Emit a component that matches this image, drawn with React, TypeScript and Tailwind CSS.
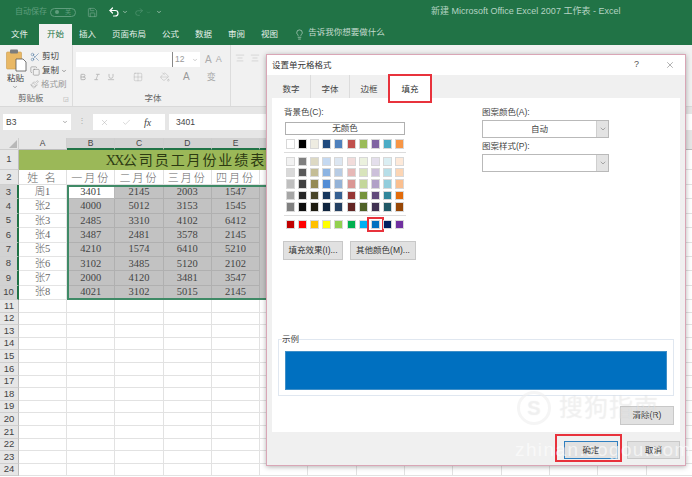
import { Save, Undo2, Redo2, Scissors, Copy, Paintbrush, Lightbulb, X, Check, ChevronDown, Bold, Italic, Underline, Grid2x2, PaintBucket, AlignCenter } from 'lucide-react';

const tabs = ['文件', '开始', '插入', '页面布局', '公式', '数据', '审阅', '视图'];
const columns = ['A', 'B', 'C', 'D', 'E', 'F', 'G', 'H', 'I', 'J', 'K', 'L', 'M', 'N'];

const people = [
  ['周1', '3401', '2145', '2003', '1547'],
  ['张2', '4000', '5012', '3153', '1545'],
  ['张3', '2485', '3310', '4102', '6412'],
  ['张4', '3487', '2481', '3578', '2145'],
  ['张5', '4210', '1574', '6410', '5210'],
  ['张6', '3102', '3485', '5120', '2102'],
  ['张7', '2000', '4120', '3481', '3547'],
  ['张8', '4021', '3102', '5015', '2145'],
];

const themeRow = ['bg-[#ffffff]', 'bg-[#000000]', 'bg-[#eeece1]', 'bg-[#1f497d]', 'bg-[#4f81bd]', 'bg-[#c0504d]', 'bg-[#9bbb59]', 'bg-[#8064a2]', 'bg-[#4bacc6]', 'bg-[#f79646]'];
const tintRows = [
  ['bg-[#f2f2f2]', 'bg-[#7f7f7f]', 'bg-[#ddd9c4]', 'bg-[#c5d9f1]', 'bg-[#dce6f1]', 'bg-[#f2dcdb]', 'bg-[#ebf1de]', 'bg-[#e4dfec]', 'bg-[#daeef3]', 'bg-[#fde9d9]'],
  ['bg-[#d9d9d9]', 'bg-[#595959]', 'bg-[#c4bd97]', 'bg-[#8db4e2]', 'bg-[#b8cce4]', 'bg-[#e6b8b7]', 'bg-[#d8e4bc]', 'bg-[#ccc0da]', 'bg-[#b7dee8]', 'bg-[#fcd5b4]'],
  ['bg-[#bfbfbf]', 'bg-[#404040]', 'bg-[#948a54]', 'bg-[#538dd5]', 'bg-[#95b3d7]', 'bg-[#da9694]', 'bg-[#c4d79b]', 'bg-[#b1a0c7]', 'bg-[#92cddc]', 'bg-[#fabf8f]'],
  ['bg-[#a6a6a6]', 'bg-[#262626]', 'bg-[#494529]', 'bg-[#16365c]', 'bg-[#366092]', 'bg-[#963634]', 'bg-[#76933c]', 'bg-[#60497a]', 'bg-[#31869b]', 'bg-[#e26b0a]'],
  ['bg-[#808080]', 'bg-[#0d0d0d]', 'bg-[#1d1b10]', 'bg-[#0f243e]', 'bg-[#244062]', 'bg-[#632523]', 'bg-[#4f6228]', 'bg-[#403151]', 'bg-[#215967]', 'bg-[#974706]'],
];
const standardRow = ['bg-[#c00000]', 'bg-[#ff0000]', 'bg-[#ffc000]', 'bg-[#ffff00]', 'bg-[#92d050]', 'bg-[#00b050]', 'bg-[#00b0f0]', 'bg-[#0070c0]', 'bg-[#002060]', 'bg-[#7030a0]'];

function SwatchRow({ colors, selected }: { colors: string[]; selected?: number }) {
  return (
    <div className="flex justify-between w-[118px]">
      {colors.map((c, i) => (
        <div key={c} className="relative w-[9px] h-[9.5px]">
          <div className={`w-full h-full border border-[#d8d8d8] ${c}`} />
          {selected === i && (
            <div className="absolute -left-[4px] -top-[3px] w-[17px] h-[15px] border-2 border-[#e8323c]" />
          )}
        </div>
      ))}
    </div>
  );
}

function Select({ value, label }: { value?: string; label: string }) {
  return (
    <div>
      <div className="text-[8.5px] leading-[12px] text-[#444]">{label}</div>
      <div className="flex items-center h-[18px] w-[127px] border border-[#b9b9b9] bg-white mt-[2px]">
        <div className="flex-1 text-center text-[8.5px] text-[#444]">{value}</div>
        <div className="flex items-center justify-center w-[12px] h-full bg-[#e3e3e3] border-l border-[#cfcfcf]">
          <ChevronDown size={8} strokeWidth={1.5} className="text-[#666]" />
        </div>
      </div>
    </div>
  );
}

function GreyButton({ text, className }: { text: string; className: string }) {
  return (
    <div className={`flex items-center justify-center bg-[#e1e1e1] border border-[#c8c8c8] text-[8.5px] text-[#333] ${className}`}>
      {text}
    </div>
  );
}

function PasteIcon() {
  return (
    <svg width="21" height="24" viewBox="0 0 21 24">
      <rect x="0.5" y="4" width="15" height="17" rx="1" fill="#e9b865" stroke="#c99a4c" strokeWidth="0.6" />
      <rect x="4" y="1.5" width="8" height="4" rx="1" fill="#7d7d7d" />
      <path d="M10 11h7l3 3v9H10z" fill="#fff" stroke="#555" strokeWidth="0.8" />
    </svg>
  );
}

function TitleBar() {
  return (
    <div className="flex items-center h-[24px] bg-[#217346] text-[#8fb9a3] pl-[15px]">
      <span className="text-[8px] text-[#5f9e7d]">自动保存</span>
      <div className="flex items-center justify-between ml-[3px] w-[26px] h-[9px] px-[4px] rounded-full border border-[#5f9e7d] text-[6px] text-[#5f9e7d]">
        <span className="w-[4px] h-[4px] bg-[#5f9e7d] rounded-full" />
        <span>关</span>
      </div>
      <Save size={11} strokeWidth={1.3} className="ml-[11px] text-[#7fae96]" />
      <Undo2 size={12} strokeWidth={2.4} className="ml-[10px] text-white" />
      <ChevronDown size={6} className="ml-[2px] text-white" />
      <Redo2 size={10} strokeWidth={1.3} className="ml-[6px] text-[#5f9e7d]" />
      <ChevronDown size={5} className="ml-[2px] text-[#5f9e7d]" />
      <ChevronDown size={6} className="ml-[5px] text-white" />
      <span className="ml-[269px] text-[9px] whitespace-nowrap text-[#b5d3c3]">新建 Microsoft Office Excel 2007 工作表 - Excel</span>
    </div>
  );
}

function TabBar() {
  return (
    <div className="flex items-end h-[21px] bg-[#217346] pl-[3px]">
      {tabs.map((t) => (
        <div
          key={t}
          className={`flex items-center justify-center h-[21px] px-[8px] text-[8.5px] whitespace-nowrap ${
            t === '开始' ? 'bg-[#f1f1f1] text-[#217346] ml-[3px] -mr-[1px]' : 'text-[#e6f0ea]'
          }`}
        >
          {t}
        </div>
      ))}
      <Lightbulb size={11} strokeWidth={1.2} className="ml-[8px] mb-[5px] text-[#e6f0ea]" />
      <span className="ml-[3px] mb-[6px] text-[8.5px] text-[#c5dbcf] whitespace-nowrap">告诉我你想要做什么</span>
    </div>
  );
}

function Ribbon() {
  return (
    <div className="flex h-[62px] bg-[#f1f1f1] border-b border-[#d9d9d9] overflow-hidden">
      {/* clipboard */}
      <div className="flex flex-col w-[73px] border-r border-[#dcdcdc] shrink-0">
        <div className="flex flex-1 pl-[6px] pt-[3px]">
          <div className="flex flex-col items-start w-[24px]">
            <PasteIcon />
            <span className="text-[8.5px] leading-[11px] text-[#444] mt-[1px] ml-[1px]">粘贴</span>
            <ChevronDown size={6} className="ml-[6px] text-[#555]" />
          </div>
          <div className="flex flex-col gap-[3px] pt-[3px] text-[8.5px] leading-[11px] text-[#444]">
            <div className="flex items-center gap-[2px]"><Scissors size={10} strokeWidth={1.2} className="text-[#44709c]" />剪切</div>
            <div className="flex items-center gap-[2px]"><Copy size={10} strokeWidth={1.2} className="text-[#777]" />复制<ChevronDown size={6} /></div>
            <div className="flex items-center gap-[2px] text-[#999]"><Paintbrush size={9} strokeWidth={1.2} />格式刷</div>
          </div>
        </div>
        <div className="flex justify-between h-[14px] text-[8.5px] pl-[18px] pr-[3px] text-[#666]"><span>剪贴板</span><span className="text-[#999] text-[6px] mt-[3px]">◲</span></div>
      </div>
      {/* font */}
      <div className="flex flex-col w-[158px] border-r border-[#dcdcdc] shrink-0 pl-[3px]">
        <div className="flex items-center flex-1 flex-col">
          <div className="flex items-center w-full pt-[7px]">
            <div className="w-[97px] h-[15px] bg-white border-r border-[#888]" />
            <div className="flex items-center justify-between w-[27px] h-[15px] bg-white text-[8.5px] text-[#999] px-[2px]">12<ChevronDown size={6} /></div>
            <span className="ml-[5px] text-[10px] text-[#aaa]">A</span>
            <span className="ml-[4px] text-[9px] text-[#aaa]">A</span>
          </div>
          <div className="flex items-center w-full gap-[6px] pt-[5px] pl-[3px] text-[#aaa]">
            <Bold size={8} strokeWidth={2.4} />
            <Italic size={8} />
            <Underline size={8} />
            <Grid2x2 size={10} strokeWidth={1} className="ml-[12px]" />
            <PaintBucket size={10} strokeWidth={1} className="ml-[11px]" />
            <span className="text-[10px] leading-none ml-[7px] text-[#999]">A</span>
            <span className="text-[9px] leading-none ml-[11px]">变</span>
          </div>
        </div>
        <div className="h-[14px] text-[8.5px] text-center text-[#666]">字体</div>
      </div>
      <div className="flex gap-[5px] pl-[4px] pt-[8px] text-[#bbb]">
        <AlignCenter size={10} strokeWidth={1.2} />
        <AlignCenter size={10} strokeWidth={1.2} />
      </div>
    </div>
  );
}

function FormulaBar() {
  return (
    <div className="flex h-[31px] bg-[#e6e6e6] pt-[7px] pl-[3px]">
      <div className="flex items-center justify-between w-[68px] h-[16px] bg-white px-[3px] text-[8.5px] text-[#444]">
        B3<ChevronDown size={6} className="text-[#555]" />
      </div>
      <span className="w-[22px] text-center text-[8px] text-[#aaa] leading-[14px]">⋮</span>
      <div className="flex items-center gap-[13px] w-[72px] h-[16px] bg-white pl-[7px] text-[#aaa]">
        <X size={9} strokeWidth={1.2} />
        <Check size={9} strokeWidth={1.2} />
        <span className="font-['Liberation_Serif'] italic text-[10px] text-[#444]">fx</span>
      </div>
      <div className="flex items-center w-[523px] h-[16px] ml-[4px] bg-white pl-[7px] text-[8.5px] text-[#444]">3401</div>
    </div>
  );
}

function RowHead({ n, active }: { n: number; active?: boolean }) {
  return (
    <div
      className={`flex items-center justify-center text-[9.5px] font-medium text-[#444] border-b border-[#cfcfcf] ${
        active ? 'bg-[#d2d2d2] border-r-2 border-r-[#217346]' : 'bg-[#e6e6e6] border-r border-r-[#bdbdbd]'
      }`}
    >
      {n}
    </div>
  );
}

function EmptyCells({ count }: { count: number }) {
  return (
    <>
      {Array.from({ length: count }, (_, i) => (
        <div key={i} className="border-r border-b border-[#e2e2e2]" />
      ))}
    </>
  );
}

function Sheet() {
  return (
    <div className="relative grid flex-1 bg-white grid-cols-[19px_48px_repeat(13,48.3px)] grid-rows-[12px_20px_15px_repeat(8,14.375px)_repeat(14,12.6px)] overflow-hidden">
      <div className="bg-[#e6e6e6] border-r border-b border-[#cfcfcf] flex items-end justify-end p-[1px]">
        <div className="w-0 h-0 border-l-[8px] border-l-transparent border-b-[8px] border-b-[#b8b8b8]" />
      </div>
      {columns.map((c, i) => (
        <div
          key={c}
          className={`flex items-center justify-center text-[8.5px] text-[#444] border-r border-[#cfcfcf] ${
            i >= 1 && i <= 6 ? 'bg-[#d2d2d2] border-b-2 border-b-[#217346]' : 'bg-[#e6e6e6] border-b border-b-[#bdbdbd]'
          }`}
        >
          {c}
        </div>
      ))}

      {/* row 1 */}
      <RowHead n={1} />
      <div className="col-span-7 flex items-center justify-center pr-[4px] bg-[#9bb858] font-['Liberation_Serif','Noto_Sans_CJK_SC',serif] text-[14px] text-[#2c3a12] whitespace-nowrap overflow-hidden">
        <span className="tracking-[-1.5px]">XX</span>
        <span className="tracking-[1.9px]">公司员工月份业绩表</span>
      </div>
      <EmptyCells count={7} />

      {/* row 2 */}
      <RowHead n={2} />
      {['姓 名', '一月份', '二月份', '三月份', '四月份'].map((h) => (
        <div key={h} className="flex items-center justify-center text-[11px] tracking-[2px] text-[#666] font-['Noto_Sans_CJK_SC',sans-serif] font-light border-r border-b border-[#e0e0e0] whitespace-nowrap overflow-hidden">
          {h}
        </div>
      ))}
      <EmptyCells count={9} />

      {/* data rows */}
      {people.map((row, r) => (
        <div key={row[0]} className="contents">
          <RowHead n={r + 3} active />
          {row.map((v, c) => (
            <div
              key={c}
              className={`flex items-center justify-center text-[10.5px] font-['Liberation_Serif','Noto_Sans_CJK_SC',serif] border-r border-b ${
                c === 0
                  ? 'border-[#e4e4e4] text-[#666] font-light'
                  : r === 0 && c === 1
                  ? 'bg-white border-[#b8b8b8] text-[#444]'
                  : 'bg-[#c2c2c2] border-[#b0b0b0] text-[#444]'
              }`}
            >
              {v}
            </div>
          ))}
          <div className="col-span-2 bg-[#c2c2c2]" />
          <EmptyCells count={7} />
        </div>
      ))}

      {/* empty rows */}
      {Array.from({ length: 14 }, (_, i) => (
        <div key={i} className="contents">
          <RowHead n={i + 11} />
          <EmptyCells count={14} />
        </div>
      ))}

      {/* selected range outline, sits on top of B3:G10 */}
      <div className="absolute left-[67px] top-[47px] w-[290px] h-[115px] border-2 border-[#3f8a66]" />
    </div>
  );
}

function FormatDialog() {
  return (
    <div className="absolute left-[266px] top-[54px] z-20 flex flex-col w-[420px] h-[412px] bg-[#f0f0f0] border border-[#d9a6b6] shadow-[0_1px_5px_rgba(0,0,0,0.3)]">
      {/* header */}
      <div className="flex items-center h-[20px] bg-white pl-[5px] pr-[10px] text-[8.5px] text-[#333]">
        <span className="flex-1">设置单元格格式</span>
        <span className="text-[9px] mr-[26px] text-[#555]">?</span>
        <X size={10} strokeWidth={1} className="text-[#444]" />
      </div>

      {/* tabs */}
      <div className="flex h-[23px] pl-[5px] text-[8.5px] text-[#444]">
        {['数字', '字体', '边框'].map((t) => (
          <div key={t} className="flex items-center justify-center w-[39px] pt-[5px] border-r border-[#dcdcdc]">{t}</div>
        ))}
        <div className="relative flex items-center justify-center w-[42px] pt-[5px] bg-white text-[#333]">
          填充
          <div className="absolute -left-[1px] -top-[1px] w-[44px] h-[29px] border-2 border-[#e8323c]" />
        </div>
      </div>

      {/* tab body */}
      <div className="flex flex-col h-[334px] mx-[5px] bg-white">
        <div className="flex pt-[8px] pl-[12px]">
          <div className="w-[198px]">
            <div className="text-[8.5px] leading-[12px] text-[#444]">背景色(C):</div>
            <div className="flex items-center justify-center w-[120px] h-[13px] mt-[4px] ml-[1px] bg-white border border-[#b0b0b0] text-[8.5px] text-[#444]">无颜色</div>
            <div className="ml-[2px] mt-[4px]">
              <SwatchRow colors={themeRow} />
              <div className="w-[122px] -ml-[2px] h-px bg-[#dcdcdc] my-[3.5px]" />
              <div className="flex flex-col gap-[1.9px]">
                {tintRows.map((row) => (
                  <SwatchRow key={row[0]} colors={row} />
                ))}
              </div>
              <div className="w-[122px] -ml-[2px] h-px bg-[#dcdcdc] my-[3.5px]" />
              <SwatchRow colors={standardRow} selected={7} />
            </div>
            <div className="flex mt-[12px] -ml-[1px] gap-[7px]">
              <GreyButton text="填充效果(I)..." className="w-[60px] h-[19px]" />
              <GreyButton text="其他颜色(M)..." className="w-[66px] h-[19px]" />
            </div>
          </div>
          <div className="flex flex-col gap-[2px]">
            <Select label="图案颜色(A):" value="自动" />
            <Select label="图案样式(P):" />
          </div>
        </div>

        <fieldset className="mt-[74px] mx-[6px] h-[62px] border border-[#e0e7f0] px-[6px]">
          <legend className="text-[8.5px] leading-[10px] text-[#444] -ml-[3px]">示例</legend>
          <div className="h-[39px] mt-[7px] bg-[#0070c0] border border-[#3f8fc8]" />
        </fieldset>

        <div className="flex justify-end pr-[6px] mt-[10px]">
          <GreyButton text="清除(R)" className="w-[54px] h-[19px]" />
        </div>
      </div>

      {/* footer */}
      <div className="flex justify-end gap-[9px] pt-[9px] pr-[5px]">
        <div className="relative">
          <GreyButton text="确定" className="w-[54px] h-[18px] !border-[#2f7fc0]" />
          <div className="absolute -left-[9px] -top-[7px] w-[67px] h-[28px] border-2 border-[#e8323c]" />
        </div>
        <GreyButton text="取消" className="w-[53px] h-[18px]" />
      </div>
    </div>
  );
}

export default function App() {
  return (
    <div className="relative flex flex-col w-[692px] h-[477px] overflow-hidden bg-white antialiased font-['Liberation_Sans','Noto_Sans_CJK_SC',sans-serif]">
      <TitleBar />
      <TabBar />
      <Ribbon />
      <FormulaBar />
      <Sheet />
      <FormatDialog />

      {/* watermark */}
      <div className="absolute left-[517px] top-[390px] z-30 flex items-center gap-[8px] text-white/40 [text-shadow:0_0_1px_rgba(0,0,0,0.1)] pointer-events-none">
        <div className="flex items-center justify-center w-[34px] h-[34px] rounded-full border-[3px] border-[#eeeeee]/60 font-bold text-[20px]">S</div>
        <span className="text-[24px] tracking-[1px] whitespace-nowrap">搜狗指南</span>
      </div>
      <div className="absolute left-[515px] top-[436px] z-30 text-[19px] tracking-[1.4px] text-white/60 whitespace-nowrap pointer-events-none">zhinan.sogou.com</div>
    </div>
  );
}
